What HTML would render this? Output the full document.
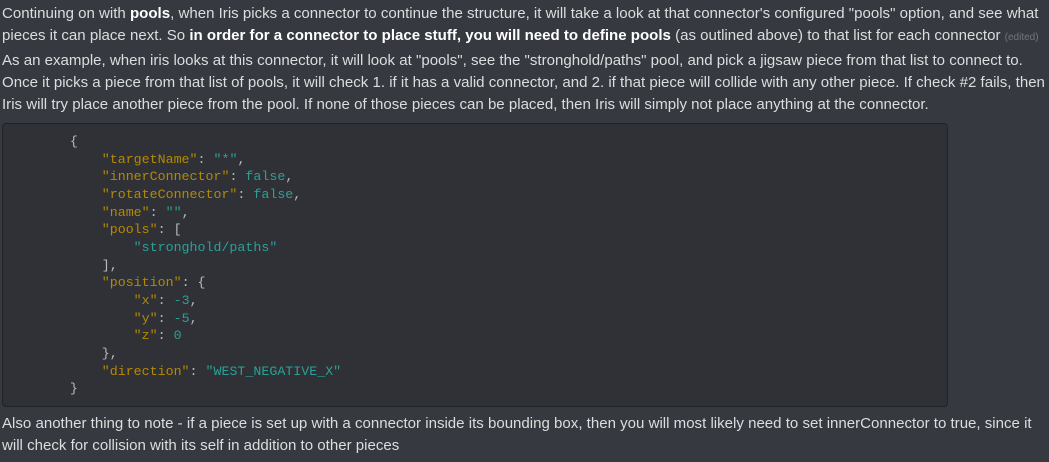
<!DOCTYPE html>
<html><head><meta charset="utf-8"><style>
body{margin:0;width:1049px;height:462px;overflow:hidden;background:#36393f;color:#dcddde;font-family:"Liberation Sans",sans-serif;font-size:15.05px;}
.p{position:absolute;left:2px;line-height:22px;white-space:nowrap;}
b{font-weight:700;color:#fff}
.ed{font-size:10px;color:#72767d}
.code{position:absolute;left:2px;top:123px;width:946px;height:284px;background:#2f3136;border:1px solid #202225;border-radius:4px;box-sizing:border-box;}
pre{margin:0;position:absolute;left:3px;top:9px;font-family:"Liberation Mono",monospace;font-size:13.3px;line-height:17.65px;color:#b9bbbe;}
.k{color:#b58900}.v{color:#2aa198}
</style></head><body>
<div class="p" style="top:3px">Continuing on with <b>pools</b>, when Iris picks a connector to continue the structure, it will take a look at that connector's configured "pools" option, and see what</div>
<div class="p" style="top:25px">pieces it can place next. So <b>in order for a connector to place stuff, you will need to define pools</b> (as outlined above) to that list for each connector <span class="ed">(edited)</span></div>
<div class="p" style="top:50px">As an example, when iris looks at this connector, it will look at "pools", see the "stronghold/paths" pool, and pick a jigsaw piece from that list to connect to.</div>
<div class="p" style="top:72px">Once it picks a piece from that list of pools, it will check 1. if it has a valid connector, and 2. if that piece will collide with any other piece. If check #2 fails, then</div>
<div class="p" style="top:94px">Iris will try place another piece from the pool. If none of those pieces can be placed, then Iris will simply not place anything at the connector.</div>
<div class="code"><pre>        {
            <span class="k">"targetName"</span>: <span class="v">"*"</span>,
            <span class="k">"innerConnector"</span>: <span class="v">false</span>,
            <span class="k">"rotateConnector"</span>: <span class="v">false</span>,
            <span class="k">"name"</span>: <span class="v">""</span>,
            <span class="k">"pools"</span>: [
                <span class="v">"stronghold/paths"</span>
            ],
            <span class="k">"position"</span>: {
                <span class="k">"x"</span>: <span class="v">-3</span>,
                <span class="k">"y"</span>: <span class="v">-5</span>,
                <span class="k">"z"</span>: <span class="v">0</span>
            },
            <span class="k">"direction"</span>: <span class="v">"WEST_NEGATIVE_X"</span>
        }</pre></div>
<div class="p" style="top:413px">Also another thing to note - if a piece is set up with a connector inside its bounding box, then you will most likely need to set innerConnector to true, since it</div>
<div class="p" style="top:435px">will check for collision with its self in addition to other pieces</div>
</body></html>
